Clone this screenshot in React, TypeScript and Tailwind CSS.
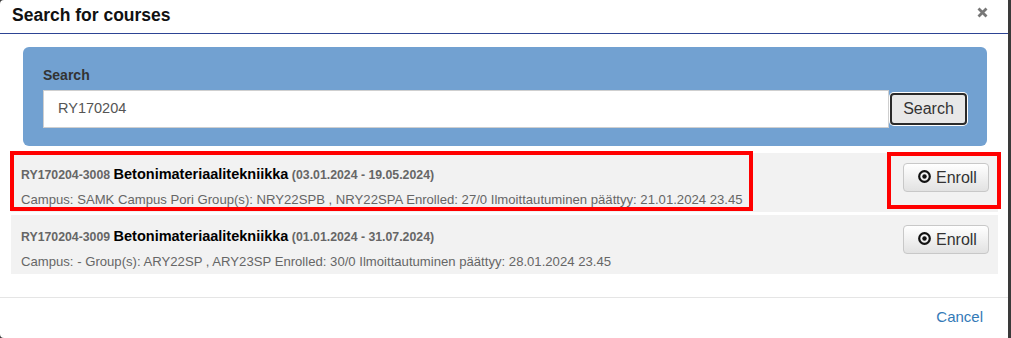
import React from "react";

const font = { fontFamily: '"Liberation Sans", Arial, sans-serif' };

function RecordIcon() {
  return (
    <svg width="13" height="13" viewBox="0 0 13 13" className="shrink-0">
      <circle cx="6.5" cy="6.5" r="5.3" fill="none" stroke="#111" strokeWidth="2.2" />
      <circle cx="6.5" cy="6.5" r="2.2" fill="#111" />
    </svg>
  );
}

function EnrollButton() {
  return (
    <button className="flex h-[29px] w-[86px] shrink-0 items-center gap-[5px] rounded-[4px] border border-[#c8c8c8] bg-gradient-to-b from-white to-[#e2e2e2] pl-[14px] text-[16px] leading-none text-[#333]">
      <span className="-mt-[3px]">
        <RecordIcon />
      </span>
      <span>Enroll</span>
    </button>
  );
}

type Course = {
  code: string;
  name: string;
  dates: string;
  info: string;
};

const courses: Course[] = [
  {
    code: "RY170204-3008",
    name: "Betonimateriaalitekniikka",
    dates: "(03.01.2024 - 19.05.2024)",
    info: "Campus: SAMK Campus Pori Group(s): NRY22SPB , NRY22SPA Enrolled: 27/0 Ilmoittautuminen päättyy: 21.01.2024 23.45",
  },
  {
    code: "RY170204-3009",
    name: "Betonimateriaalitekniikka",
    dates: "(01.01.2024 - 31.07.2024)",
    info: "Campus: - Group(s): ARY22SP , ARY23SP Enrolled: 30/0 Ilmoittautuminen päättyy: 28.01.2024 23.45",
  },
];

function CourseRow({ c, highlight }: { c: Course; highlight?: boolean }) {
  return (
    <div className="relative flex h-[59px] justify-between bg-[#f2f2f2] pl-[10px] pr-[9px] pt-[11px]">
      <div className="text-[12.3px] leading-[20px]">
        <div className="whitespace-nowrap leading-[20px]">
          <span className="font-bold text-[#666]">{c.code}</span>{" "}
          <span className="text-[14.5px] font-bold leading-[20px] text-black">{c.name}</span>{" "}
          <span className="font-bold text-[#666]">{c.dates}</span>
        </div>
        <div className="mt-[5px] whitespace-nowrap text-[13.13px] leading-[20px] text-[#666]">{c.info}</div>
      </div>
      <div className="-mt-[1px]">
        <EnrollButton />
      </div>
      {highlight && (
        <>
          <div className="pointer-events-none absolute left-[-1px] top-[-2px] h-[60px] w-[743px] border-4 border-[#ff0000]" />
          <div className="pointer-events-none absolute left-[876px] top-[-1px] h-[57px] w-[114px] border-4 border-[#ff0000]" />
        </>
      )}
    </div>
  );
}

export default function App() {
  return (
    <div className="h-[338px] w-full overflow-hidden bg-[#3a3a3a]" style={font}>
      <div className="flex h-[338px] w-[1008px] flex-col rounded-tl-[4px] rounded-bl-[4px] bg-white">
        {/* Header */}
        <div className="flex h-[34px] shrink-0 items-start justify-between border-b border-[#2d4494] pl-[12px] pr-[20px]">
          <h4 className="pt-[5px] text-[17.5px] font-bold leading-[20px] text-[#111]">Search for courses</h4>
          <button className="mt-[7px]" aria-label="Close">
            <svg width="11" height="11" viewBox="0 0 11 11">
              <path d="M1.5 1.5 L9.5 9.5 M9.5 1.5 L1.5 9.5" stroke="#777" strokeWidth="2.8" strokeLinecap="butt" />
            </svg>
          </button>
        </div>

        {/* Body */}
        <div className="flex flex-col pb-[23px] pl-[11px] pr-[10px] pt-[13px]">
          <div className="ml-[12px] mr-[11px] rounded-[6px] bg-[#72a1d1] px-[20px] pb-[18px] pt-[18px]">
            <label className="block text-[14px] font-bold leading-[20px] text-[#333]">Search</label>
            <div className="mt-[5px] flex items-center">
              <div className="flex h-[38px] flex-1 items-center border border-[#cfcfcf] bg-white pl-[14px] text-[14.5px] text-[#555]">
                RY170204
              </div>
              <button className="ml-[1px] h-[32px] w-[77px] rounded-[4px] border-2 border-[#2a2a2a] bg-[#e8e8e8] text-[16px] text-[#333] shadow-[0_0_0_1px_#ffffff]">
                Search
              </button>
            </div>
          </div>

          <div className="mt-[7px] flex flex-col gap-[3px]">
            <CourseRow c={courses[0]} highlight />
            <CourseRow c={courses[1]} />
          </div>
        </div>

        {/* Footer */}
        <div className="flex flex-1 justify-end border-t border-[#e5e5e5] pr-[25px] pt-[9px]">
          <a className="text-[15px] leading-[20px] text-[#337ab7]" href="#">
            Cancel
          </a>
        </div>
      </div>
    </div>
  );
}
